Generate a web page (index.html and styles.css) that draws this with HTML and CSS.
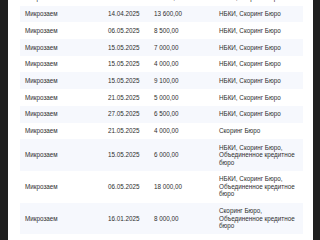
FILE: index.html
```html
<!DOCTYPE html>
<html lang="ru">
<head>
<meta charset="utf-8">
<link rel="stylesheet" href="styles.css">
</head>
<body>
<div class="frame">
  <div class="panel">
    <table class="loans">
      <colgroup>
        <col class="c-type"><col class="c-date"><col class="c-sum"><col class="c-bureau">
      </colgroup>
      <tbody>
        <tr><td>Микрозаем</td><td>07.04.2025</td><td>10 000,00</td><td>НБКИ, Скоринг Бюро</td></tr>
        <tr><td>Микрозаем</td><td>14.04.2025</td><td>13 600,00</td><td>НБКИ, Скоринг Бюро</td></tr>
        <tr><td>Микрозаем</td><td>06.05.2025</td><td>8 500,00</td><td>НБКИ, Скоринг Бюро</td></tr>
        <tr><td>Микрозаем</td><td>15.05.2025</td><td>7 000,00</td><td>НБКИ, Скоринг Бюро</td></tr>
        <tr><td>Микрозаем</td><td>15.05.2025</td><td>4 000,00</td><td>НБКИ, Скоринг Бюро</td></tr>
        <tr><td>Микрозаем</td><td>15.05.2025</td><td>9 100,00</td><td>НБКИ, Скоринг Бюро</td></tr>
        <tr><td>Микрозаем</td><td>21.05.2025</td><td>5 000,00</td><td>НБКИ, Скоринг Бюро</td></tr>
        <tr><td>Микрозаем</td><td>27.05.2025</td><td>6 500,00</td><td>НБКИ, Скоринг Бюро</td></tr>
        <tr><td>Микрозаем</td><td>21.05.2025</td><td>4 000,00</td><td>Скоринг Бюро</td></tr>
        <tr><td>Микрозаем</td><td>15.05.2025</td><td>6 000,00</td><td>НБКИ, Скоринг Бюро, Объединенное кредитное бюро</td></tr>
        <tr><td>Микрозаем</td><td>06.05.2025</td><td>18 000,00</td><td>НБКИ, Скоринг Бюро, Объединенное кредитное бюро</td></tr>
        <tr><td>Микрозаем</td><td>16.01.2025</td><td>8 000,00</td><td>Скоринг Бюро, Объединенное кредитное бюро</td></tr>
        <tr><td>Микрозаем</td><td>11.01.2025</td><td>5 000,00</td><td>НБКИ, Скоринг Бюро, Объединенное кредитное бюро</td></tr>
      </tbody>
    </table>
  </div>
</div>
</body>
</html>
```

FILE: styles.css
```css
html, body {
  margin: 0;
  padding: 0;
  background: #1f1f1f;
  overflow: hidden;
}
.frame {
  display: flex;
  width: 320px;
  height: 240px;
  padding-left: 8px;
  box-sizing: border-box;
}
.panel {
  width: 305px;
  height: 240px;
  background: #ffffff;
  overflow: hidden;
  padding-left: 12px;
  box-sizing: border-box;
}
.loans {
  margin-top: -11px;
  width: 283px;
  border-collapse: collapse;
  table-layout: fixed;
  font-family: "Liberation Sans", Arial, sans-serif;
  font-size: 6.3px;
  line-height: 7.5px;
  color: #2e2e2e;
}
.c-type { width: 83px; }
.c-date { width: 46px; }
.c-sum { width: 65px; }
.c-bureau { width: 89px; }
.loans td {
  padding: 4.6px 5px;
  vertical-align: middle;
  text-align: left;
}
.loans tr:nth-child(even) td {
  background: #f6f8fd;
}
```
